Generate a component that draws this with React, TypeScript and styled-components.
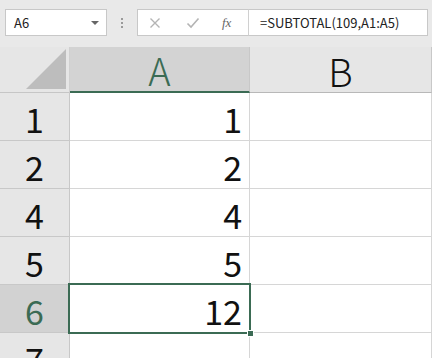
import React from "react";
import styled, { createGlobalStyle } from "styled-components";

const GREEN = "#3b6b54";
const FONT = `"Noto Sans CJK SC", "Noto Sans", sans-serif`;

const Global = createGlobalStyle`
  html, body { margin: 0; padding: 0; background: #fff; }
  * { box-sizing: border-box; }
`;

const Frame = styled.div`
  width: 432px;
  height: 358px;
  overflow: hidden;
  background: #e8e8e8;
  display: flex;
  flex-direction: column;
  font-family: ${FONT};
`;

const Toolbar = styled.div`
  height: 47px;
  flex-shrink: 0;
  display: flex;
  align-items: flex-start;
  padding: 9px 4px 0 5px;
  background: #e9e9e9;
`;

const NameBox = styled.div`
  width: 102px;
  height: 27px;
  background: #fff;
  border: 1px solid #c8c8c8;
  display: flex;
  align-items: center;
  justify-content: space-between;
  padding: 0 7px 0 8px;
  font-size: 13px;
  color: #222;
`;

const Caret = styled.span`
  width: 0;
  height: 0;
  border-left: 4px solid transparent;
  border-right: 4px solid transparent;
  border-top: 4px solid #666;
`;

const Dots = styled.div`
  width: 30px;
  height: 27px;
  display: flex;
  flex-direction: column;
  align-items: center;
  justify-content: center;
  gap: 2px;
`;

const Dot = styled.span`
  width: 2px;
  height: 2px;
  background: #9a9a9a;
`;

const ButtonBox = styled.div`
  width: 112px;
  height: 27px;
  background: #fff;
  border: 1px solid #c8c8c8;
  border-right: 1px solid #d0d0d0;
  display: flex;
  align-items: center;
  padding-left: 11px;
`;

const IconSlot = styled.span<{ $w: number }>`
  width: ${(p) => p.$w}px;
  display: flex;
  align-items: center;
  justify-content: flex-start;
`;

const Fx = styled.span`
  font-family: "Liberation Serif", serif;
  font-style: italic;
  font-size: 13px;
  color: #666;
`;

const FormulaInput = styled.div`
  flex: 1;
  height: 27px;
  background: #fff;
  border: 1px solid #c8c8c8;
  border-left: none;
  display: flex;
  align-items: center;
  padding-left: 11px;
  font-size: 13px;
  color: #222;
`;

const Sheet = styled.div`
  flex-shrink: 0;
  display: grid;
  grid-template-columns: 70px 180px 1fr;
  grid-template-rows: 46px repeat(6, 48px);
  background: #fff;
`;

const Corner = styled.div`
  background: #e6e6e6;
  border-right: 1px solid #d0d0d0;
  border-bottom: 1px solid #c6c6c6;
  display: flex;
  align-items: flex-end;
  justify-content: flex-end;
  padding: 0 3px 3px 0;
`;

const ColHead = styled.div<{ $active?: boolean }>`
  background: ${(p) => (p.$active ? "#d3d3d3" : "#e6e6e6")};
  border-right: 1px solid #c8c8c8;
  border-bottom: ${(p) => (p.$active ? `2px solid ${GREEN}` : "1px solid #b8b8b8")};
  color: ${(p) => (p.$active ? GREEN : "#111")};
  display: flex;
  align-items: center;
  justify-content: center;
  font-size: 38px;
  font-weight: 300;
  line-height: 1;
  padding-top: 2px;
`;

const RowHead = styled.div<{ $active?: boolean }>`
  background: ${(p) => (p.$active ? "#d2d2d2" : "#e6e6e6")};
  border-right: 1px solid #c8c8c8;
  border-bottom: 1px solid #c8c8c8;
  color: ${(p) => (p.$active ? GREEN : "#111")};
  display: flex;
  align-items: center;
  justify-content: center;
  font-size: 34px;
  font-weight: 400;
  line-height: 1;
  padding-top: 4px;
`;

const Cell = styled.div`
  position: relative;
  background: #fff;
  border-right: 1px solid #d6d6d6;
  border-bottom: 1px solid #d6d6d6;
  display: flex;
  align-items: center;
  justify-content: flex-end;
  padding: 4px 7px 0 0;
  font-size: 34px;
  font-weight: 400;
  line-height: 1;
  color: #111;
`;

const Selection = styled.div`
  position: absolute;
  z-index: 2;
  left: -2px;
  top: -2px;
  right: -2px;
  bottom: -2px;
  border: 2px solid ${GREEN};
  pointer-events: none;
`;

const Handle = styled.div`
  position: absolute;
  right: -5px;
  bottom: -5px;
  width: 7px;
  height: 7px;
  background: ${GREEN};
  border: 1px solid #fff;
`;

const rows: { n: string; v: string; sel?: boolean }[] = [
  { n: "1", v: "1" },
  { n: "2", v: "2" },
  { n: "4", v: "4" },
  { n: "5", v: "5" },
  { n: "6", v: "12", sel: true },
  { n: "7", v: "" },
];

export default function App() {
  return (
    <>
      <Global />
      <Frame>
        <Toolbar>
          <NameBox>
            A6
            <Caret />
          </NameBox>
          <Dots>
            <Dot />
            <Dot />
            <Dot />
          </Dots>
          <ButtonBox>
            <IconSlot $w={37}>
              <svg width="12" height="12" viewBox="0 0 12 12">
                <path d="M1.5 1.5 L10.5 10.5 M10.5 1.5 L1.5 10.5" stroke="#b4b4b4" strokeWidth="1.4" fill="none" />
              </svg>
            </IconSlot>
            <IconSlot $w={36}>
              <svg width="14" height="12" viewBox="0 0 14 12">
                <path d="M1.5 6.5 L5 10 L12.5 1.5" stroke="#b4b4b4" strokeWidth="1.6" fill="none" />
              </svg>
            </IconSlot>
            <IconSlot $w={20}>
              <Fx>fx</Fx>
            </IconSlot>
          </ButtonBox>
          <FormulaInput>=SUBTOTAL(109,A1:A5)</FormulaInput>
        </Toolbar>
        <Sheet>
          <Corner>
            <svg width="40" height="40" viewBox="0 0 40 40">
              <polygon points="40,0 40,40 0,40" fill="#bdbdbd" />
            </svg>
          </Corner>
          <ColHead $active>A</ColHead>
          <ColHead>B</ColHead>
          {rows.map((r) => (
            <React.Fragment key={r.n}>
              <RowHead $active={r.sel}>{r.n}</RowHead>
              <Cell>
                {r.v}
                {r.sel && (
                  <Selection>
                    <Handle />
                  </Selection>
                )}
              </Cell>
              <Cell />
            </React.Fragment>
          ))}
        </Sheet>
      </Frame>
    </>
  );
}
